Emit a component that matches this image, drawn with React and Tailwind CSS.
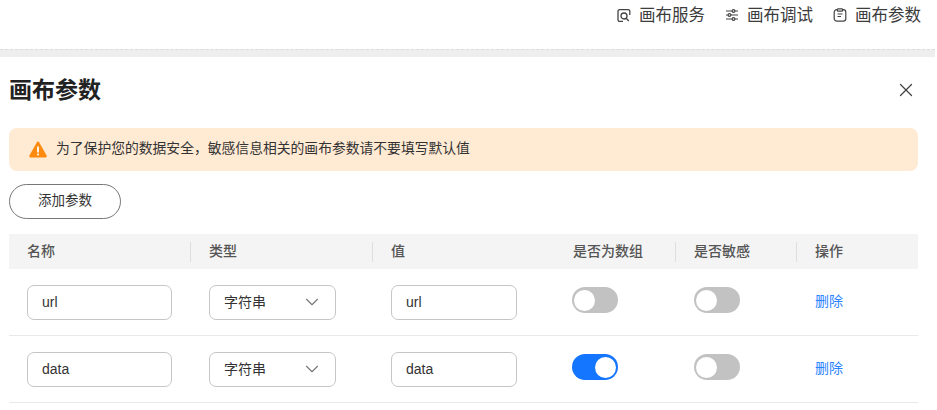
import React from 'react';
import { ChevronDown, X } from 'lucide-react';

const fontCss = "font-['Liberation_Sans','Noto_Sans_CJK_SC',sans-serif]";

const Switch = ({ on }) => (
  <div className={`flex h-[26px] w-[46px] items-center rounded-full px-[2px] ${on ? 'justify-end bg-[#1476ff]' : 'justify-start bg-[#c2c2c2]'}`}>
    <div className="h-[21px] w-[21px] rounded-full bg-white" />
  </div>
);

const TopAction = ({ icon, label }) => (
  <div className="flex items-center gap-[8px]">
    {icon}
    <span className="text-[16.5px] leading-[20px] text-[#3c3c3c]">{label}</span>
  </div>
);

const Row = ({ name, isArray }) => (
  <div className="grid h-[67px] grid-cols-[182px_182px_182px_121px_121px_121px] items-center border-b border-[#e9e9e9]">
    <div className="pl-[18px]">
      <div className="flex h-[35px] w-[145px] items-center rounded-[7px] border border-[#c6c6c6] pl-[14px] text-[14px] text-[#333]">{name}</div>
    </div>
    <div className="pl-[18px]">
      <div className="flex h-[35px] w-[127px] items-center justify-between rounded-[7px] border border-[#c6c6c6] pl-[14px] pr-[12px] text-[14px] text-[#333]">
        <span>字符串</span>
        <ChevronDown size={22} strokeWidth={1.2} color="#777" />
      </div>
    </div>
    <div className="pl-[18px]">
      <div className="flex h-[35px] w-[126px] items-center rounded-[7px] border border-[#c6c6c6] pl-[14px] text-[14px] text-[#333]">{name}</div>
    </div>
    <div className="-mt-[4px] pl-[17px]"><Switch on={isArray} /></div>
    <div className="-mt-[4px] pl-[18px]"><Switch on={false} /></div>
    <div className="-mt-[1px] pl-[18px] text-[14px] text-[#2b84ff]">删除</div>
  </div>
);

const App = () => {
  return (
    <div className={`h-[410px] w-[937px] overflow-hidden bg-white ${fontCss}`}>
      {/* Barra superior */}
      <div className="flex h-[49px] items-start justify-end gap-[20px] pr-[16px] pt-[5px]">
        <TopAction
          label="画布服务"
          icon={
            <svg width="14" height="15" viewBox="0 0 14 15" fill="none" stroke="#444" strokeWidth="1.3">
              <path d="M6 13.4H2.6A1.6 1.6 0 0 1 1 11.8V3.2a1.6 1.6 0 0 1 1.6-1.6h8.6a1.6 1.6 0 0 1 1.6 1.6V7" />
              <circle cx="7" cy="8" r="3" />
              <path d="M9.2 10.2 11.8 13" />
            </svg>
          }
        />
        <TopAction
          label="画布调试"
          icon={
            <svg width="14" height="14" viewBox="0 0 14 14" fill="none" stroke="#444" strokeWidth="1.2">
              <path d="M1 3h6M10 3h3M1 7h2M6 7h7M1 11h6M10 11h3" />
              <circle cx="8.5" cy="3" r="1.4" />
              <circle cx="4.5" cy="7" r="1.4" />
              <circle cx="8.5" cy="11" r="1.4" />
            </svg>
          }
        />
        <TopAction
          label="画布参数"
          icon={
            <svg width="14" height="14" viewBox="0 0 14 14" fill="none" stroke="#444" strokeWidth="1.2">
              <rect x="1.2" y="1.6" width="11.6" height="11.6" rx="2.6" />
              <rect x="4.4" y="0.8" width="5.2" height="2.4" rx="0.8" fill="#fff" />
              <path d="M4.5 6h5M4.5 8.5h3.5" />
            </svg>
          }
        />
      </div>

      {/* Separador gris */}
      <div className="h-[8px] w-[935px] border-t border-dashed border-[#dcdcdc] bg-[#eeeeee]" />

      <div className="px-[9px]">
        <div className="mb-[5px] mr-[10px] flex h-[66px] items-center justify-between pr-[2px]">
          <h1 className="text-[23px] font-bold text-[#222]">画布参数</h1>
          <X size={22} strokeWidth={1.4} color="#444" className="-mr-[1px] -mt-[1px]" />
        </div>

        {/* Aviso */}
        <div className="flex h-[43px] w-[909px] items-center gap-[9px] rounded-lg bg-[#ffead3] pl-[20px] text-[13.8px] text-[#333]">
          <svg width="18" height="17" viewBox="0 0 18 17">
            <path d="M7.9 1.2a1.3 1.3 0 0 1 2.2 0l7.5 13.4a1.3 1.3 0 0 1-1.1 1.9H1.5a1.3 1.3 0 0 1-1.1-1.9Z" fill="#fc8a0e" />
            <rect x="8.1" y="5.5" width="1.8" height="6" fill="#fff" />
            <rect x="8.1" y="12.6" width="1.8" height="1.8" fill="#fff" />
          </svg>
          <span>为了保护您的数据安全，敏感信息相关的画布参数请不要填写默认值</span>
        </div>

        <button className="mt-[13px] flex h-[35px] w-[112px] items-center justify-center rounded-full border border-[#777] bg-white text-[13.5px] text-[#333]">
          添加参数
        </button>

        {/* Tabla */}
        <div className="mt-[15px] w-[909px]">
          <div className="grid h-[35px] grid-cols-[182px_182px_182px_121px_121px_121px] items-center bg-[#f4f4f4] text-[14px] font-medium text-[#555]">
            <div className="h-[20px] border-r border-[#dedede] pl-[18px] leading-[18px]">名称</div>
            <div className="h-[20px] border-r border-[#dedede] pl-[18px] leading-[18px]">类型</div>
            <div className="h-[20px] pl-[18px] leading-[18px]">值</div>
            <div className="h-[20px] border-r border-[#dedede] pl-[18px] leading-[18px]">是否为数组</div>
            <div className="h-[20px] border-r border-[#dedede] pl-[18px] leading-[18px]">是否敏感</div>
            <div className="h-[20px] pl-[18px] leading-[18px]">操作</div>
          </div>
          <Row name="url" isArray={false} />
          <Row name="data" isArray={true} />
        </div>
      </div>
    </div>
  );
};

export default App;
